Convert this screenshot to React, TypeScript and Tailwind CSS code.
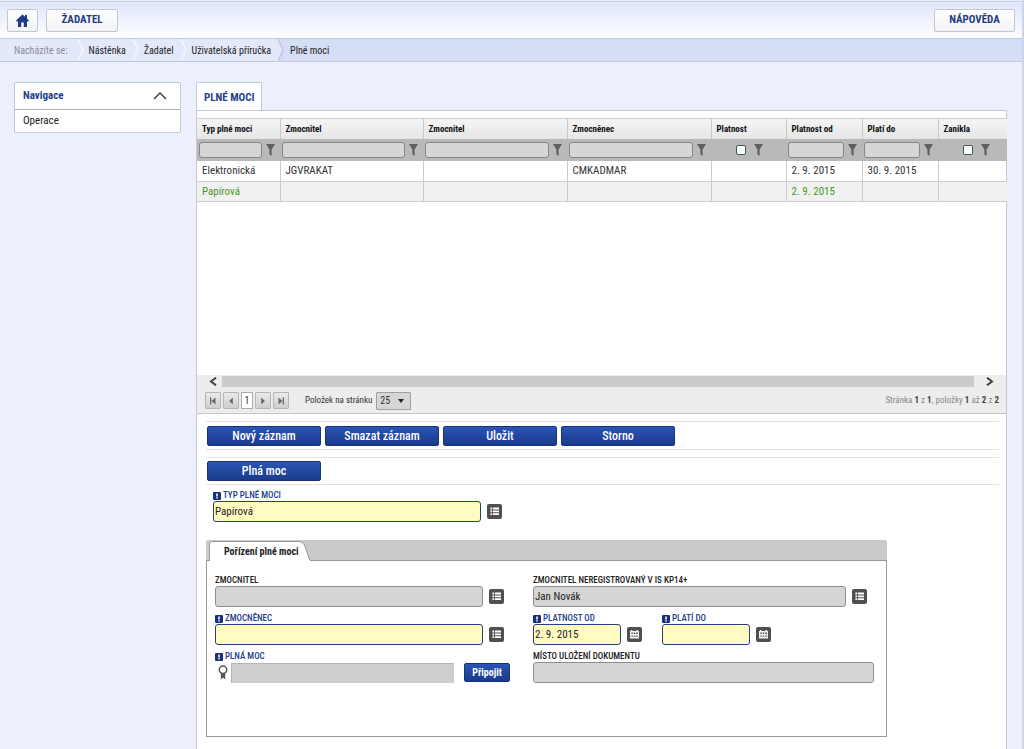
import { useId, useState } from "react"
import type { ReactNode } from "react"
import clsx from "clsx"

const crumbs = ["Nástěnka", "Žadatel", "Uživatelská příručka"]

const columns = [
    { key: "typ", title: "Typ plné moci", width: "w-[83px]", filter: "text" },
    { key: "zmocnitel", title: "Zmocnitel", width: "w-[143px]", filter: "text" },
    { key: "zmocnitel2", title: "Zmocnitel", width: "w-[144px]", filter: "text" },
    { key: "zmocnenec", title: "Zmocněnec", width: "w-[144px]", filter: "text" },
    { key: "platnost", title: "Platnost", width: "w-[75px]", filter: "check" },
    { key: "od", title: "Platnost od", width: "w-[76px]", filter: "text" },
    { key: "do", title: "Platí do", width: "w-[76px]", filter: "text" },
    { key: "zanikla", title: "Zanikla", width: "w-[69px]", filter: "check" },
]

const rows: Record<string, string>[] = [
    { typ: "Elektronická", zmocnitel: "JGVRAKAT", zmocnenec: "CMKADMAR", od: "2. 9. 2015", do: "30. 9. 2015" },
    { typ: "Papírová", od: "2. 9. 2015" },
]

function HomeIcon() {
    return (
        <svg viewBox="0 0 13 13" className="w-[13px] h-[13px]" fill="#1d3c86">
            <path d="M6.5 0.5 L0 6.6 L1 7.8 L2 7 V13 H5.2 V8.6 H7.8 V13 H11 V7 L12 7.8 L13 6.6 L11 4.7 V1 H9 V2.8 Z" />
        </svg>
    )
}

function FunnelIcon() {
    return (
        <svg viewBox="0 0 9 12" className="w-[9px] h-[12px]" fill="#5f5f5f">
            <path d="M0 0 H9 L5.6 5.6 V12 L3.4 10.4 V5.6 Z" />
        </svg>
    )
}

function CrumbArrow({ current }: { current?: boolean }) {
    return (
        <svg viewBox="0 0 6 22" preserveAspectRatio="none" className="w-[6px] h-[22px] shrink-0">
            {current && <path d="M0 0 H6 V22 H0 L5 11 Z" fill="#d3dcf3" />}
            <path d="M0 0 L5 11 L0 22" fill="none" stroke={current ? "#bac5e2" : "#f8faff"} strokeWidth="1.2" />
        </svg>
    )
}

function ListIcon() {
    return (
        <svg viewBox="0 0 15 15" className="w-[15px] h-[15px]">
            <rect width="15" height="15" rx="2" fill="#505050" />
            <path d="M3.4 3.6h1.8v1.8H3.4zM6 3.6h6v1.8H6zM3.4 6.4h1.8v1.8H3.4zM6 6.4h6v1.8H6zM3.4 9.2h1.8V11H3.4zM6 9.2h6V11H6z" fill="#fff" />
        </svg>
    )
}

function CalendarIcon() {
    return (
        <svg viewBox="0 0 15 15" className="w-[15px] h-[15px]">
            <rect width="15" height="15" rx="2" fill="#505050" />
            <path d="M3 4h1V3h1.4v1h4.2V3H11v1h1v7.4H3z" fill="#f4f4f4" />
            <path d="M4.4 5.6h1.4V7H4.4zM6.8 5.6h1.4V7H6.8zM9.2 5.6h1.6V7H9.2zM4.4 8.4h1.4v1.4H4.4zM6.8 8.4h1.4v1.4H6.8zM9.2 8.4h1.6v1.4H9.2z" fill="#505050" />
        </svg>
    )
}

function RequiredIcon() {
    return (
        <svg viewBox="0 0 8 8" className="w-2 h-2 shrink-0">
            <rect width="8" height="8" rx="1" fill="#17317c" />
            <path d="M3.2 1.4h1.6v3H3.2zM3.2 5.2h1.6v1.4H3.2z" fill="#fff" />
        </svg>
    )
}

function RibbonIcon() {
    return (
        <svg viewBox="0 0 10 15" className="w-[10px] h-[15px]">
            <path d="M2.8 8 V14.5 L5 12.5 L7.2 14.5 V8 Z" fill="#555" />
            <circle cx="5" cy="4.8" r="3.7" fill="#fff" stroke="#555" strokeWidth="1.5" />
        </svg>
    )
}

interface FieldProps {
    label: string
    value?: string
    required?: boolean
    width: string
    icon?: ReactNode
    iconLabel?: string
}

function Field({ label, value = "", required, width, icon, iconLabel }: FieldProps) {
    const id = useId()
    return (
        <div>
            <FieldLabel id={id} label={label} required={required} />
            <div className="flex items-center gap-[6px]">
                <input
                    id={id}
                    defaultValue={value}
                    className={clsx(
                        "h-[21px] px-px text-[11px] rounded-[3px] border text-[#222]",
                        width,
                        required ? "bg-[#fffbc1] border-[#27407f]" : "bg-[#d5d5d5] border-[#8f8f8f]"
                    )}
                />
                {icon && <button aria-label={iconLabel}>{icon}</button>}
            </div>
        </div>
    )
}

function FieldLabel({ id, label, required }: { id: string; label: string; required?: boolean }) {
    return (
        <label
            htmlFor={id}
            className={clsx(
                "flex items-center gap-[2px] h-[11px] text-[9px] leading-[11px] font-medium",
                required ? "text-[#24408e]" : "text-[#222]"
            )}
        >
            {required && <RequiredIcon />}
            {label}
        </label>
    )
}

function ActionButton({ children }: { children: ReactNode }) {
    return (
        <button className="w-[114px] h-5 rounded-[2px] border border-[#16307a] bg-linear-to-b from-[#2b55b5] to-[#1a3a8c] text-white text-[12px] leading-[18px] font-medium">
            {children}
        </button>
    )
}

function PagerButton({ label, d }: { label: string; d: string }) {
    return (
        <button
            aria-label={label}
            className="flex items-center justify-center w-4 h-[17px] border border-[#b5b5b5] rounded-[1px] bg-linear-to-b from-[#eaeaea] to-[#cfcfcf]"
        >
            <svg viewBox="0 0 8 8" className="w-2 h-2" fill="#666">
                <path d={d} />
            </svg>
        </button>
    )
}

function Header() {
    const button = "flex items-center justify-center h-[23px] border border-[#c3c7d2] rounded-[2px] bg-linear-to-b from-white to-[#f3f3f5] text-[11px] font-bold text-[#1f3a80]"
    return (
        <header className="border-t border-[#c3cadb] mt-px pt-px">
            <div className="flex items-center gap-2 h-[35px] px-[7px] bg-linear-to-b from-[#e0e6fb] to-white">
                <button aria-label="Domů" className={clsx(button, "w-[31px]")}>
                    <HomeIcon />
                </button>
                <button className={clsx(button, "w-[72px]")}>ŽADATEL</button>
                <button className={clsx(button, "w-[81px] ml-auto")}>NÁPOVĚDA</button>
            </div>
        </header>
    )
}

function Breadcrumb() {
    return (
        <nav className="flex items-center h-6 border-y border-[#bfcae0] text-[10px] text-[#222] bg-[#d5def4]">
            <div className="flex items-center h-full pl-[14px] bg-[#e3e9fb]">
                <span className="pr-[10px] text-[#8b8f99]">Nacházíte se:</span>
                {crumbs.map((crumb) => (
                    <span key={crumb} className="flex items-center">
                        <CrumbArrow />
                        <a href="#" className="pl-[5px] pr-[7px]">{crumb}</a>
                    </span>
                ))}
                <CrumbArrow current />
            </div>
            <span className="pl-[6px]">Plné moci</span>
        </nav>
    )
}

function Sidebar() {
    const [open, setOpen] = useState(true)
    return (
        <aside className="w-[167px] shrink-0 self-start border border-[#c4c8d4] rounded-[2px] bg-white">
            <button
                onClick={() => setOpen(!open)}
                className="flex items-center justify-between w-full h-[26px] pl-2 pr-[13px] text-[11px] font-bold text-[#24408e]"
            >
                Navigace
                <svg viewBox="0 0 14 8" className="w-[14px] h-2" fill="none" stroke="#333" strokeWidth="1.3">
                    <path d="M1 7 L7 1 L13 7" />
                </svg>
            </button>
            {open && (
                <a href="#" className="block h-[23px] pl-2 border-t border-[#b3b3b3] text-[11px] leading-[22px] text-[#222]">
                    Operace
                </a>
            )}
        </aside>
    )
}

function Grid() {
    return (
        <div className="h-[256px]">
            <table className="w-full table-fixed border-collapse text-left">
                <thead>
                    <tr className="h-5 bg-linear-to-b from-[#f5f5f5] to-[#e6e6e6]">
                        {columns.map((col) => (
                            <th key={col.key} className={clsx("p-0 pl-[5px] border-r last:border-r-0 border-[#c8c8c8] text-[9px] leading-[19px] font-bold text-[#111]", col.width)}>
                                {col.title}
                            </th>
                        ))}
                    </tr>
                    <tr className="h-[22px] bg-[#b9b9b9]">
                        {columns.map((col) => (
                            <td key={col.key} className="p-0">
                                {col.filter === "text" ? (
                                    <div className="flex items-center gap-1 pl-[2px] pr-[5px]">
                                        <input aria-label={`Filtr ${col.title}`} className="h-4 min-w-0 flex-1 px-1 rounded-[3px] border border-[#858585] bg-[#d6d6d6] text-[10px]" />
                                        <button aria-label="Filtrovat"><FunnelIcon /></button>
                                    </div>
                                ) : (
                                    <div className="flex items-center gap-2 pl-[25px]">
                                        <input
                                            type="checkbox"
                                            aria-label={`Filtr ${col.title}`}
                                            className="appearance-none w-[10px] h-[10px] rounded-[2px] border border-[#3d5a50] bg-white checked:bg-[#1a3a8c]"
                                        />
                                        <button aria-label="Filtrovat"><FunnelIcon /></button>
                                    </div>
                                )}
                            </td>
                        ))}
                    </tr>
                </thead>
                <tbody>
                    {rows.map((row) => (
                        <tr key={row.typ} className="h-5 text-[#333] even:text-[#46981c] even:bg-[#f1f1f1]">
                            {columns.map((col) => (
                                <td key={col.key} className="p-0 pl-[5px] border-r last:border-r-0 border-b border-[#cbcbcb] text-[11px] leading-[19px]">
                                    {row[col.key]}
                                </td>
                            ))}
                        </tr>
                    ))}
                </tbody>
            </table>
        </div>
    )
}

function Pager() {
    return (
        <div className="bg-[#ededed] border-b border-[#c6c6c6]">
            <div className="flex items-center h-[13px] px-3">
                <button aria-label="Posunout vlevo" className="w-[13px]">
                    <svg viewBox="0 0 8 9" className="w-2 h-[9px]" fill="none" stroke="#444" strokeWidth="2">
                        <path d="M7 0.7 L2 4.5 L7 8.3" />
                    </svg>
                </button>
                <div className="flex-1 h-[11px] bg-[#cbcbcb]" />
                <button aria-label="Posunout vpravo" className="w-5 flex justify-end">
                    <svg viewBox="0 0 8 9" className="w-2 h-[9px]" fill="none" stroke="#444" strokeWidth="2">
                        <path d="M1 0.7 L6 4.5 L1 8.3" />
                    </svg>
                </button>
            </div>
            <div className="flex items-center h-[25px] pl-2 pr-[7px] text-[9px] text-[#333]">
                <div className="flex items-center gap-[2px]">
                    <PagerButton label="První" d="M1 0.5h1.3v7H1zM6.5 0.5v7L2.6 4z" />
                    <PagerButton label="Předchozí" d="M5.8 0.5v7L2.2 4z" />
                    <button className="w-3 h-[17px] border border-[#aaa] bg-white text-[10px] leading-[15px]">1</button>
                    <PagerButton label="Další" d="M2.2 0.5v7L5.8 4z" />
                    <PagerButton label="Poslední" d="M5.7 0.5H7v7H5.7zM1.5 0.5v7L5.4 4z" />
                </div>
                <label htmlFor="page-size" className="pl-4 pr-1">Položek na stránku</label>
                <span className="relative flex items-center">
                    <select id="page-size" defaultValue="25" className="appearance-none w-[35px] h-[18px] pl-[3px] border border-[#a0a0a0] rounded-[1px] bg-[#d6d6d6] text-[10px]">
                        <option>10</option>
                        <option>25</option>
                        <option>50</option>
                    </select>
                    <svg viewBox="0 0 6 4" className="absolute right-[7px] w-[6px] h-1 pointer-events-none" fill="#222">
                        <path d="M0 0 H6 L3 4 Z" />
                    </svg>
                </span>
                <span className="ml-auto text-[#888]">
                    Stránka <b className="text-[#444]">1</b> z <b className="text-[#444]">1</b>, položky <b className="text-[#444]">1</b> až <b className="text-[#444]">2</b> z <b className="text-[#444]">2</b>
                </span>
            </div>
        </div>
    )
}

function DetailPanel() {
    const fileId = useId()
    return (
        <section className="max-w-[681px] mt-[18px]">
            <div className="flex items-end h-[21px] pl-[3px] rounded-t-[2px] bg-[#cacaca] border-b border-[#9a9a9a]">
                <div className="relative flex items-center h-5 w-[102px] -mb-px">
                    <svg viewBox="0 0 102 20" className="absolute inset-0 w-full h-full">
                        <path d="M0.5 20 V3 Q0.5 0.5 3 0.5 H90 Q94 0.5 95.5 4 L101 20" fill="#fff" stroke="#9a9a9a" />
                        <path d="M1 20 H101" stroke="#fff" strokeWidth="2" />
                    </svg>
                    <h2 className="relative pl-[15px] text-[10px] font-bold text-[#222]">Pořízení plné moci</h2>
                </div>
            </div>
            <div className="flex h-[176px] pl-2 pt-[14px] border border-t-0 border-[#999]">
                <div className="w-[318px] shrink-0 flex flex-col gap-[6px]">
                    <Field label="ZMOCNITEL" width="w-[268px]" icon={<ListIcon />} iconLabel="Vybrat zmocnitele" />
                    <Field label="ZMOCNĚNEC" required width="w-[268px]" icon={<ListIcon />} iconLabel="Vybrat zmocněnce" />
                    <div>
                        <FieldLabel id={fileId} label="PLNÁ MOC" required />
                        <div className="flex items-center h-[21px] pl-[3px]">
                            <RibbonIcon />
                            <input id={fileId} readOnly className="w-[223px] h-5 ml-[3px] mr-[10px] border-t border-l border-[#b5b5b5] bg-[#cecece] text-[11px]" />
                            <button className="w-[46px] h-[19px] rounded-[2px] border border-[#16307a] bg-linear-to-b from-[#2b55b5] to-[#1a3a8c] text-white text-[10px] leading-[17px] font-bold">
                                Připojit
                            </button>
                        </div>
                    </div>
                </div>
                <div className="flex flex-col gap-[6px]">
                    <Field label="ZMOCNITEL NEREGISTROVANÝ V IS KP14+" value="Jan Novák" width="w-[313px]" icon={<ListIcon />} iconLabel="Vybrat osobu" />
                    <div className="flex gap-5">
                        <Field label="PLATNOST OD" value="2. 9. 2015" required width="w-[88px]" icon={<CalendarIcon />} iconLabel="Vybrat datum od" />
                        <Field label="PLATÍ DO" required width="w-[88px]" icon={<CalendarIcon />} iconLabel="Vybrat datum do" />
                    </div>
                    <Field label="MÍSTO ULOŽENÍ DOKUMENTU" width="w-[341px]" />
                </div>
            </div>
        </section>
    )
}

export default function App() {
    return (
        <div className="flex flex-col min-h-screen border-r-2 border-[#cdd4ec] bg-[#ecf0fd] font-['Roboto_Condensed','Roboto',sans-serif]">
            <Header />
            <Breadcrumb />
            <div className="flex flex-1 gap-[15px] pl-[14px] pr-[15px] pt-5">
                <Sidebar />
                <main className="flex flex-col flex-1 min-w-0">
                    <h1 className="self-start h-7 px-[7px] border border-b-0 border-[#c4c8d4] rounded-t-[2px] bg-white text-[11px] leading-[29px] font-bold text-[#24408e]">
                        PLNÉ MOCI
                    </h1>
                    <div className="flex-1 border border-b-0 border-[#c4c8d4] bg-white">
                        <div className="h-2 border-b border-[#cfcfcf]" />
                        <Grid />
                        <Pager />
                        <div className="pl-[9px] pr-[7px] pt-[7px]">
                            <div className="flex gap-1 h-[29px] pl-px pt-1 border-y border-[#e2e2e2]">
                                <ActionButton>Nový záznam</ActionButton>
                                <ActionButton>Smazat záznam</ActionButton>
                                <ActionButton>Uložit</ActionButton>
                                <ActionButton>Storno</ActionButton>
                            </div>
                            <div className="flex h-[28px] mt-[7px] pl-px pt-[3px] border-y border-[#e2e2e2]">
                                <ActionButton>Plná moc</ActionButton>
                            </div>
                            <div className="pl-[7px] pt-[5px]">
                                <Field label="TYP PLNÉ MOCI" value="Papírová" required width="w-[268px]" icon={<ListIcon />} iconLabel="Vybrat typ plné moci" />
                            </div>
                            <DetailPanel />
                        </div>
                    </div>
                </main>
            </div>
        </div>
    )
}
